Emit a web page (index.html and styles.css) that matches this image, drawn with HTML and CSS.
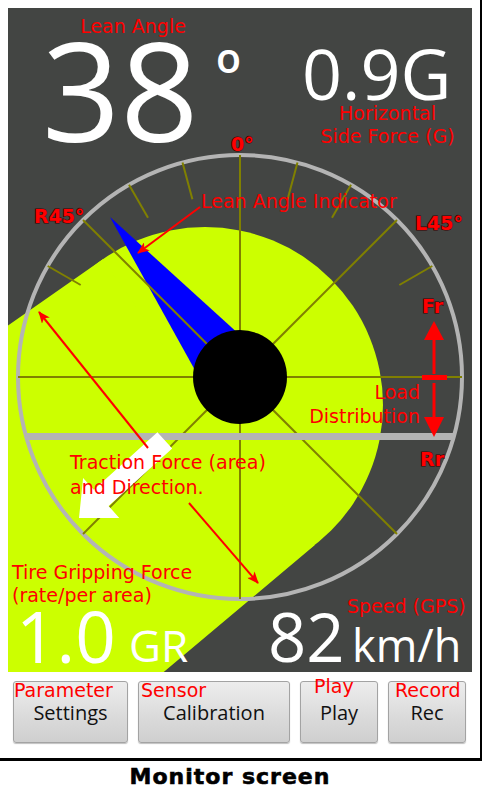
FILE: index.html
```html
<!DOCTYPE html>
<html>
<head>
<meta charset="utf-8">
<link rel="stylesheet" href="styles.css">
</head>
<body>
<div class="frame">
  <div class="panel">
    <svg class="gauge" width="464" height="664" viewBox="8 8 464 664" xmlns="http://www.w3.org/2000/svg">
      <defs>
        <marker id="ah" viewBox="0 0 12 10" refX="11" refY="5" markerWidth="12" markerHeight="10" markerUnits="userSpaceOnUse" orient="auto">
          <path d="M0,0 L12,5 L0,10 L3,5 z" fill="#ff0000"/>
        </marker>
        <clipPath id="clip"><rect x="8" y="8" width="464" height="664"/></clipPath>
      </defs>
      <g clip-path="url(#clip)">
        <rect class="bg" x="8" y="8" width="464" height="664"/>
        <!-- traction force area -->
        <circle class="grip" cx="205" cy="405" r="178"/>
        <polygon class="grip" points="102.8,259.2 0,331.2 0,690 142.3,690 314.6,545.3 205,405"/>
        <!-- needle -->
        <polygon class="needle" points="110,217 196,372 241,336"/>
        <!-- scale -->
        <circle class="ring" cx="240" cy="377" r="222"/>
        <g class="scale">
          <line x1="18" y1="377" x2="462" y2="377"/>
          <line x1="240" y1="155" x2="240" y2="599"/>
          <line x1="83" y1="220" x2="397" y2="534"/>
          <line x1="397" y1="220" x2="83" y2="534"/>
          <line x1="182.5" y1="162.6" x2="192.4" y2="199.3"/>
          <line x1="297.5" y1="162.6" x2="287.6" y2="199.3"/>
          <line x1="129" y1="184.7" x2="148" y2="217.7"/>
          <line x1="351" y1="184.7" x2="332" y2="217.7"/>
          <line x1="47.7" y1="266" x2="80.7" y2="285"/>
          <line x1="432.3" y1="266" x2="399.3" y2="285"/>
        </g>
        <line class="axle" x1="25" y1="436.5" x2="454" y2="436.5"/>
        <circle class="hub" cx="240" cy="377" r="47"/>
        <!-- traction direction arrow -->
        <polygon class="tract" points="79,518 119.3,517.9 108.6,506 172.2,448.4 157.4,432.2 93.8,489.8 83.1,477.9"/>
        <!-- load distribution arrows -->
        <line class="load" x1="434" y1="336" x2="434" y2="374"/>
        <polygon class="loadhead" points="434,321 424,340 444,340"/>
        <rect class="loadhead" x="422" y="375" width="25" height="5"/>
        <line class="load" x1="434" y1="383" x2="434" y2="420"/>
        <polygon class="loadhead" points="424,417 444,417 434,437"/>
        <!-- annotation pointers -->
        <line class="note" x1="200" y1="207" x2="138" y2="253" marker-end="url(#ah)"/>
        <line class="note" x1="148" y1="448" x2="39" y2="312" marker-end="url(#ah)"/>
        <line class="note" x1="189" y1="503" x2="258" y2="583" marker-end="url(#ah)"/>
        <!-- scale marks -->
        <text class="mark" x="231" y="151">0°</text>
        <text class="mark" x="34" y="223">R45°</text>
        <text class="mark" x="415" y="230">L45°</text>
        <text class="mark" x="422" y="313">Fr</text>
        <text class="mark" x="420" y="466">Rr</text>
        <!-- readings -->
        <text class="big angle" x="42" y="142">38</text>
        <text class="big deg" x="216" y="73">o</text>
        <text class="big gforce" x="302" y="100">0.9G</text>
        <text class="big grip-val" x="16" y="663">1.0</text>
        <text class="big grip-unit" x="129" y="662">GR</text>
        <text class="big speed" x="268" y="662">82</text>
        <text class="big speed-unit" x="352" y="662">km/h</text>
        <!-- annotations -->
        <text class="lbl" x="133" y="33" text-anchor="middle">Lean Angle</text>
        <text class="lbl" x="387.5" y="120" text-anchor="middle">Horizontal</text>
        <text class="lbl" x="387.5" y="143" text-anchor="middle">Side Force (G)</text>
        <text class="lbl" x="201" y="208">Lean Angle Indicator</text>
        <text class="lbl" x="420" y="399" text-anchor="end">Load</text>
        <text class="lbl" x="420" y="423" text-anchor="end">Distribution</text>
        <text class="lbl" x="70" y="469">Traction Force (area)</text>
        <text class="lbl" x="70" y="494">and Direction.</text>
        <text class="lbl" x="12" y="579">Tire Gripping Force</text>
        <text class="lbl" x="12" y="602">(rate/per area)</text>
        <text class="lbl" x="347" y="613">Speed (GPS)</text>
      </g>
    </svg>
  </div>
  <div class="buttons">
    <div class="btn btn-param"><span class="tag">Parameter</span><span class="label">Settings</span></div>
    <div class="btn btn-sensor"><span class="tag">Sensor</span><span class="label">Calibration</span></div>
    <div class="btn btn-play"><span class="tag">Play</span><span class="label">Play</span></div>
    <div class="btn btn-rec"><span class="tag">Record</span><span class="label">Rec</span></div>
  </div>
</div>
<div class="caption">Monitor screen</div>
</body>
</html>
```

FILE: styles.css
```css
html, body {
  margin: 0;
  padding: 0;
  background: #ffffff;
}

.frame {
  width: 482px;
  height: 761px;
  box-sizing: border-box;
  padding: 8px 0 0 8px;
  border-right: 2px solid #000;
  border-bottom: 3px solid #000;
}

.panel {
  width: 464px;
  height: 664px;
}

.gauge {
  display: block;
}

.bg { fill: #434543; }
.grip { fill: #ccff00; }
.needle { fill: #0000ff; }
.ring { fill: none; stroke: #b4b4b4; stroke-width: 4; }
.scale line { stroke: #808000; stroke-width: 2; }
.axle { stroke: #b4b4b4; stroke-width: 7; }
.hub { fill: #000; }
.tract { fill: #ffffff; }
.load { stroke: #ff0000; stroke-width: 3; }
.loadhead { fill: #ff0000; }
.note { stroke: #ff0000; stroke-width: 2; }

.mark {
  font-family: "DejaVu Sans", sans-serif;
  font-weight: bold;
  font-size: 19px;
  fill: #ff0000;
  stroke: #3a0000;
  stroke-width: 1.2px;
  paint-order: stroke;
}

.lbl {
  font-family: "DejaVu Sans", sans-serif;
  font-size: 19px;
  fill: #ff0000;
}

.big {
  font-family: "Open Sans", "Noto Sans", sans-serif;
  fill: #ffffff;
}
.angle { font-size: 137px; }
.deg { font-size: 41px; font-weight: 600; }
.gforce { font-size: 70px; }
.grip-val { font-size: 71px; }
.grip-unit { font-size: 44px; }
.speed { font-size: 67px; }
.speed-unit { font-size: 45px; }

.buttons {
  display: flex;
  gap: 10px;
  margin-top: 9px;
  padding-left: 5px;
}

.btn {
  position: relative;
  height: 62px;
  box-sizing: border-box;
  border: 1px solid #a3a3a3;
  border-radius: 3px;
  background: linear-gradient(#ededed, #dadada 60%, #cfcfcf);
  box-shadow: 0 1px 1px rgba(0, 0, 0, 0.25);
  display: flex;
  justify-content: center;
  padding-top: 19px;
}

.btn-param { width: 115px; }
.btn-sensor { width: 152px; }
.btn-play { width: 78px; }
.btn-rec { width: 78px; }

.label {
  font-family: "Open Sans", "Noto Sans", sans-serif;
  font-size: 20px;
  line-height: 24px;
  color: #111;
}

.tag {
  position: absolute;
  top: -2px;
  left: 0;
  font-family: "DejaVu Sans", sans-serif;
  font-size: 19px;
  line-height: 20px;
  color: #ff0000;
  white-space: nowrap;
}

.btn-sensor .tag { left: 2px; }
.btn-play .tag { left: 13px; top: -6px; }
.btn-rec .tag { left: 6px; }

.caption {
  width: 460px;
  text-align: center;
  font-family: "DejaVu Sans", sans-serif;
  font-weight: bold;
  font-size: 22px;
  line-height: 32px;
  letter-spacing: 1px;
  color: #000;
  -webkit-text-stroke: 0.6px #000;
}
```
